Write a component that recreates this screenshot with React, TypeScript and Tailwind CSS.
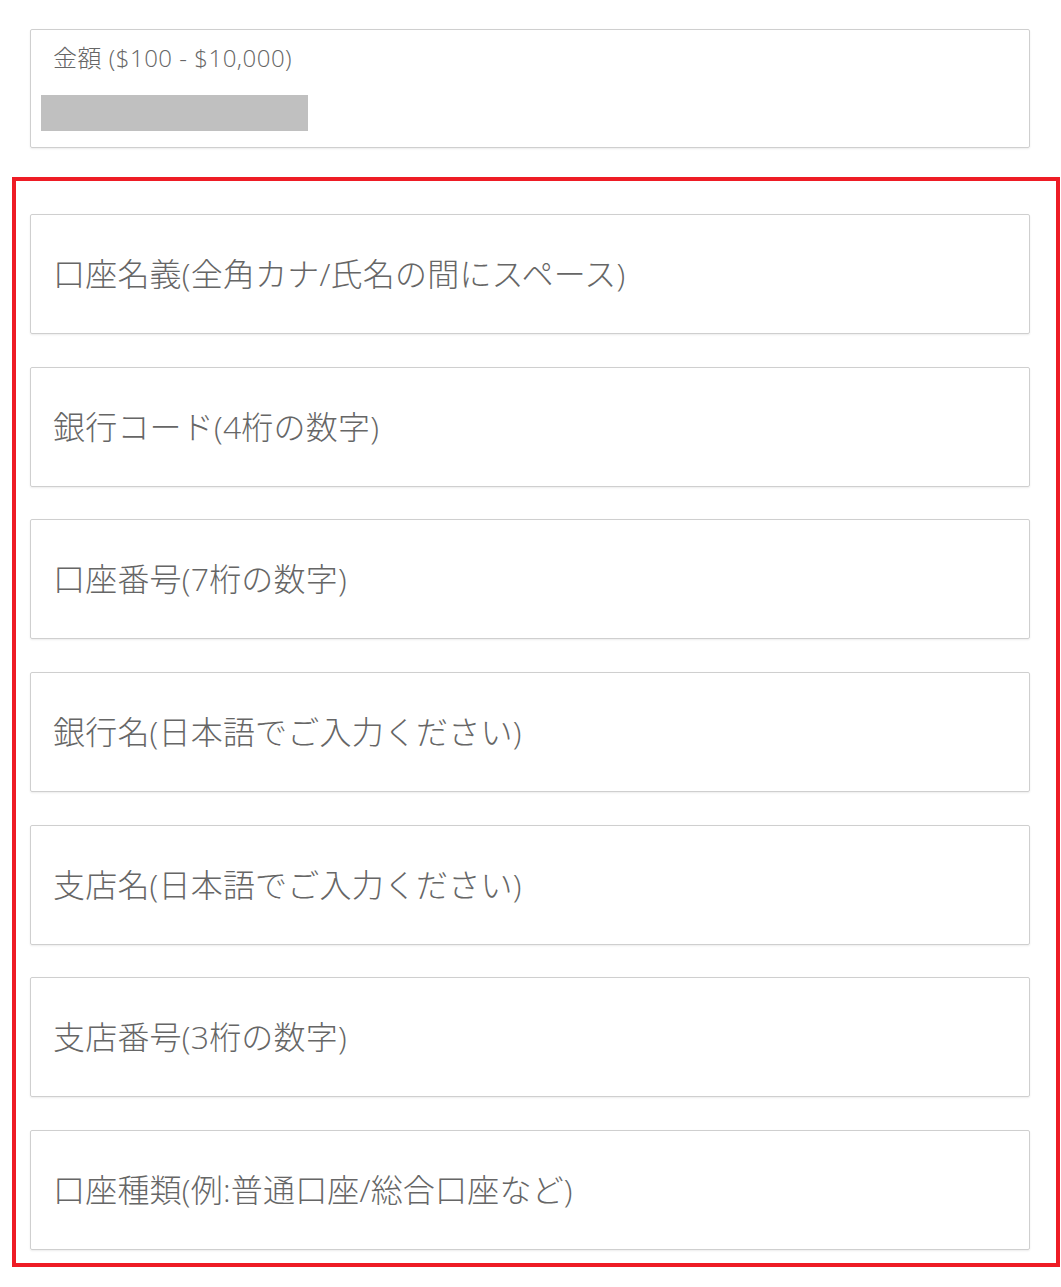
import React from 'react';

const fields = [
  '口座名義(全角カナ/氏名の間にスペース)',
  '銀行コード(4桁の数字)',
  '口座番号(7桁の数字)',
  '銀行名(日本語でご入力ください)',
  '支店名(日本語でご入力ください)',
  '支店番号(3桁の数字)',
  '口座種類(例:普通口座/総合口座など)',
];

const font = { fontFamily: '"Open Sans", "Noto Sans CJK JP", "Noto Sans", sans-serif' };

export default function App() {
  return (
    <div className="w-[1061px] h-[1287px] bg-white pl-[12px] pr-[1px] pt-[29px]" style={font}>
      <div className="ml-[18px] w-[1000px] h-[119px] border border-[#cfcfcf] rounded-[2px] shadow-[0_1px_2px_rgba(0,0,0,0.08)]">
        <div className="pl-[22px] pt-[13px] text-[24px] leading-[30px] font-light tracking-[0.5px] text-[#666666]">金額 ($100 - $10,000)</div>
        <div className="ml-[10px] mt-[22px] w-[267px] h-[36px] bg-[#c0c0c0]" />
      </div>
      <div className="mt-[29px] w-[1048px] border-[4px] border-[#ee1c25] pl-[14px] pt-[33px] pb-[13px] flex flex-col gap-[32.67px]">
        {fields.map((label) => (
          <div
            key={label}
            className="w-[1000px] h-[120px] border border-[#cfcfcf] rounded-[2px] shadow-[0_1px_2px_rgba(0,0,0,0.08)] flex items-center pl-[22px]"
          >
            <span className="text-[32px] leading-none font-light tracking-[0.2px] text-[#666666]">{label}</span>
          </div>
        ))}
      </div>
    </div>
  );
}
